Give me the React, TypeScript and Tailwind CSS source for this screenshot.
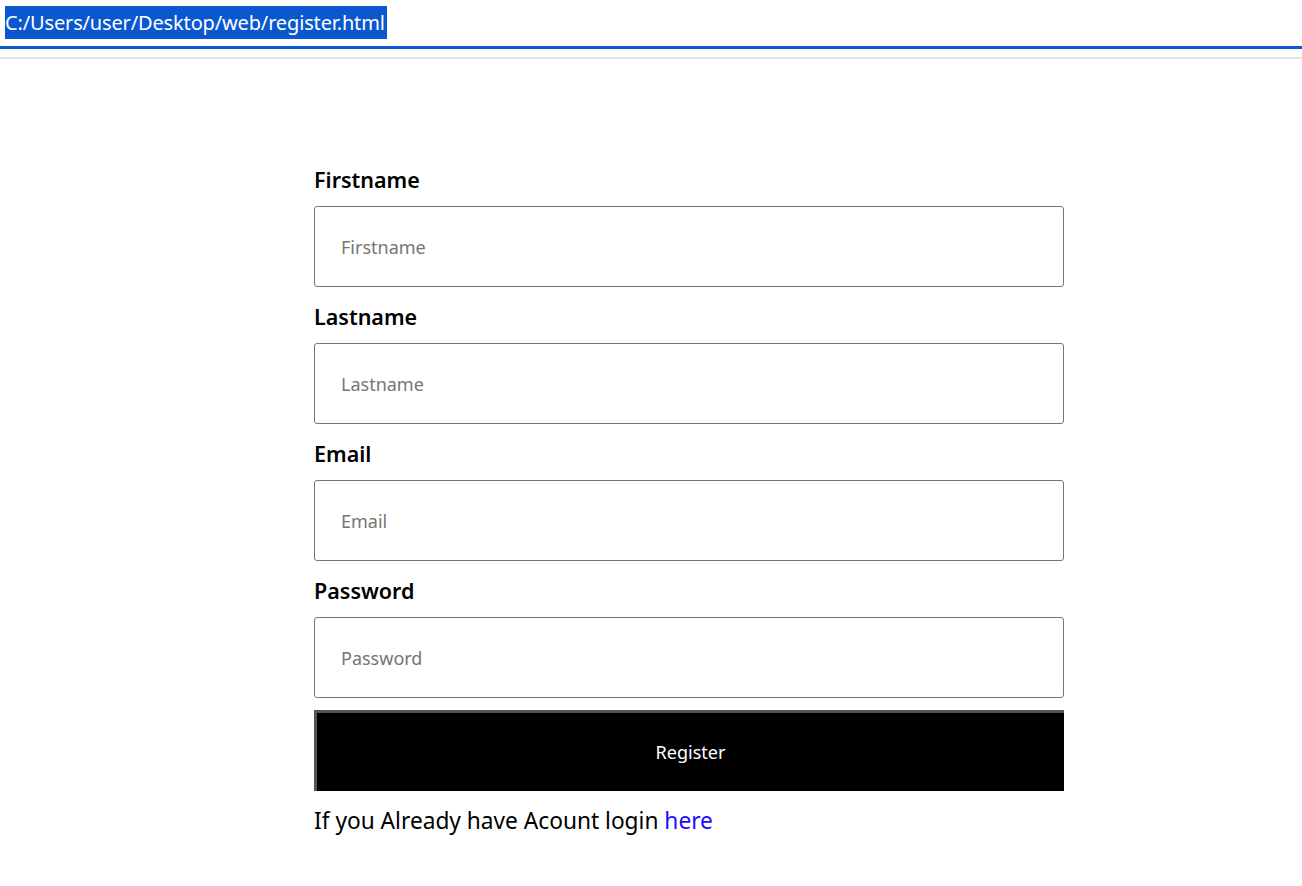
import React from "react";

const fields = ["Firstname", "Lastname", "Email", "Password"];

const App: React.FC = () => {
  return (
    <div
      className="min-h-[886px] bg-white text-black"
      style={{ fontFamily: '"Noto Sans", "Open Sans", sans-serif' }}
    >
      {/* Address line */}
      <div className="h-[46px] pl-[5px] pt-[6px]">
        <span className="inline-block h-[33px] bg-[#0b57d0] pr-[2px] text-[20px] leading-[33px] text-white tracking-[-0.15px]">
          C:/Users/user/Desktop/web/register.html
        </span>
      </div>
      <div className="h-[3px] bg-[#0b57d0]"></div>
      <div className="mt-[8px] h-[2px] bg-[#e2e2e2]"></div>

      {/* Form */}
      <form className="ml-[314px] mt-[107px] w-[750px]">
        {fields.map((f, i) => (
          <div key={f}>
            <label
              className={`block text-[21.5px] font-semibold leading-[28px] mb-[12px] ${
                i === 0 ? "" : "mt-[16px]"
              }`}
            >
              {f}
            </label>
            <input
              type={f === "Password" ? "password" : "text"}
              placeholder={f}
              className="block h-[81px] w-full rounded-[3px] border border-[#767676] px-[26px] text-[18px] text-black outline-none placeholder:text-[#757575]"
            />
          </div>
        ))}
        <button
          type="button"
          className="mt-[12px] block h-[81px] w-full border-t-[3px] border-l-[3px] border-[#555] bg-black text-[18px] text-white"
        >
          Register
        </button>
        <p className="mt-[15px] text-[22.7px] leading-[30px]">
          If you Already have Acount login{" "}
          <a href="#" className="text-[#1a0dff]">
            here
          </a>
        </p>
      </form>
    </div>
  );
};

export default App;
